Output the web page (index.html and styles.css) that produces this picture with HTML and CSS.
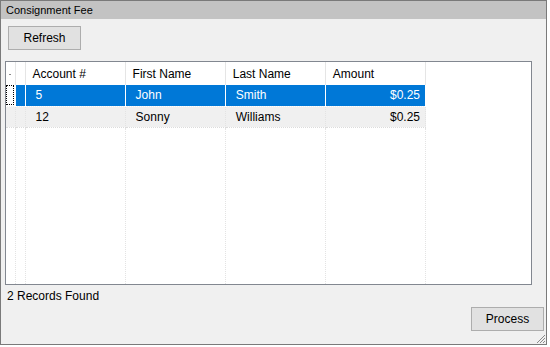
FILE: index.html
```html
<!DOCTYPE html>
<html>
<head>
    <link rel="stylesheet" href="styles.css">
</head>
<body>
    <!-- Window -->
    <div class="window">
        <div class="titlebar">Consignment Fee</div>

        <div class="toolbar">
            <button class="btn">Refresh</button>
        </div>

        <!-- Records grid -->
        <div class="grid">
            <table class="grid-table">
                <tr class="head">
                    <th class="rh first"><span class="sort-dot"></span></th>
                    <th class="rh"></th>
                    <th>Account #</th>
                    <th>First Name</th>
                    <th>Last Name</th>
                    <th>Amount</th>
                </tr>
                <tr class="row selected">
                    <td class="rh first"><span class="focus"></span></td>
                    <td class="rh"></td>
                    <td>5</td>
                    <td>John</td>
                    <td>Smith</td>
                    <td class="num">$0.25</td>
                </tr>
                <tr class="row alt">
                    <td class="rh first"></td>
                    <td class="rh"></td>
                    <td>12</td>
                    <td>Sonny</td>
                    <td>Williams</td>
                    <td class="num">$0.25</td>
                </tr>
                <tr class="filler">
                    <td class="rh first"></td>
                    <td class="rh"></td>
                    <td></td>
                    <td></td>
                    <td></td>
                    <td></td>
                </tr>
            </table>
        </div>

        <div class="status">2 Records Found</div>

        <div class="footer">
            <button class="btn">Process</button>
        </div>

        <svg class="grip" width="10" height="10" viewBox="0 0 10 10">
            <path d="M9 1 L1 9 M9 4 L4 9 M9 7 L7 9" stroke="#8a8a8a" stroke-width="1" fill="none"/>
        </svg>
    </div>
</body>
</html>
```

FILE: styles.css
```css
body {
    margin: 0;
    background: #ffffff;
    font-family: "Liberation Sans", Arial, sans-serif;
    font-size: 12px;
    color: #000;
}

/* Window frame */
.window {
    position: relative;
    width: 545px;
    height: 343px;
    border: 1px solid #7a7a7a;
    background: #f0f0f0;
    display: flex;
    flex-direction: column;
}
.titlebar {
    height: 18px;
    line-height: 18px;
    padding-left: 5px;
    background: #c3c3c3;
    font-size: 11px;
}

.btn {
    width: 73px;
    height: 24px;
    padding: 0;
    border: 1px solid #adadad;
    background: #e1e1e1;
    font-family: inherit;
    font-size: 12px;
    color: #000;
}
.toolbar {
    padding: 7px 0 0 7px;
}

/* Grid */
.grid {
    margin: 11px 0 0 4px;
    width: 525px;
    height: 222px;
    border: 1px solid #828790;
    background: #fff;
    overflow: hidden;
}
.grid-table {
    border-collapse: collapse;
    height: 100%;
    table-layout: fixed;
    width: 420px;
}
.grid-table th,
.grid-table td {
    width: 100px;
    padding: 0 0 0 10px;
    text-align: left;
    white-space: nowrap;
    box-sizing: border-box;
    border-right: 1px dotted #e3e3e3;
}
.grid-table th {
    height: 23px;
    font-weight: normal;
    padding-left: 7px;
    border-right: 1px solid #e5e5e5;
}
.grid-table .rh {
    width: 10px;
    padding: 0;
}
.grid-table .rh.first {
    width: 9px;
}
.row td {
    height: 21px;
    border-bottom: 1px dotted #dcdcdc;
}
.row td.num {
    text-align: right;
    padding-right: 5px;
}
.row.selected td {
    background: #0078d7;
    color: #fff;
    border-right: 1px solid #fff;
    border-bottom-color: #fff;
}
.row.selected td.first {
    background: #fff;
    position: relative;
}
.row.alt td {
    background: #f0f0f0;
}
.filler td {
    height: auto;
}
.sort-dot {
    display: block;
    width: 2px;
    height: 1px;
    margin: 2px auto 0;
    background: #888;
}
.focus {
    position: absolute;
    left: 0;
    top: 0;
    right: 1px;
    bottom: 1px;
    border: 1px dotted #000;
}

.status {
    padding: 4px 0 0 6px;
    height: 17px;
}

.footer {
    display: flex;
    justify-content: flex-end;
    padding: 1px 2px 0 0;
}

.grip {
    position: absolute;
    right: 0;
    bottom: 0;
}
```
